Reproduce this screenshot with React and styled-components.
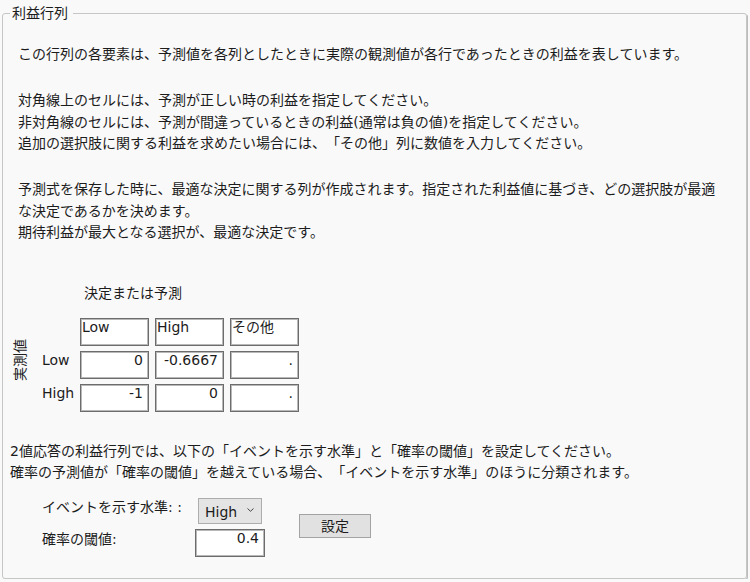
import * as React from 'react';
import styled, { createGlobalStyle } from 'styled-components';

const GlobalStyle = createGlobalStyle`
  html, body {
    margin: 0;
    padding: 0;
    background: #f9f9f9;
  }

  body {
    font-family: "DejaVu Sans", "Noto Sans CJK JP", sans-serif;
    font-size: 14px;
    color: #1c1c1c;
    text-spacing-trim: space-all;
  }
`;

const GroupBox = styled.fieldset`
  box-sizing: border-box;
  height: 576px;
  margin: 3px 3px 0 2px;
  padding: 0 7px;
  border: 1px solid #c6c6c6;
  border-radius: 3px;
  box-shadow: 1px 1px 0 #bcbcbc;
  min-inline-size: 0;
`;

const Legend = styled.legend`
  padding: 0 5px 0 2px;
  line-height: 20px;
`;

const Intro = styled.div`
  margin: 21px 0 0 8px;

  p {
    margin: 0 0 24.5px;
    line-height: 21.5px;
  }

  p:last-child {
    margin-bottom: 0;
  }
`;

const Matrix = styled.div`
  margin-top: 39px;
`;

const MatrixTitle = styled.div`
  padding-left: 74px;
  line-height: 21.5px;
  margin-bottom: 14px;
`;

const MatrixGrid = styled.div`
  display: grid;
  grid-template-columns: 20px 38px repeat(3, 69px);
  grid-template-rows: repeat(3, 28px);
  column-gap: 6px;
  row-gap: 5px;
`;

const SideLabel = styled.div`
  grid-column: 1;
  grid-row: 1 / 4;
  align-self: center;
  justify-self: center;
  writing-mode: vertical-rl;
  text-orientation: sideways;
  transform: rotate(180deg);
  margin-bottom: 10px;
  line-height: 15px;
`;

const RowLabel = styled.div`
  grid-column: 2;
  padding: 1px 0 0 6px;
  line-height: 16px;
`;

const Field = styled.div`
  box-sizing: border-box;
  width: ${p => p.$w || 69}px;
  height: ${p => p.$h || 28}px;
  padding: ${p => (p.$align === 'right' ? '0 5px 0 0' : '0 0 0 1px')};
  text-align: ${p => p.$align || 'left'};
  line-height: 16px;
  background: #fff;
  border: 1px solid #6c6c6c;
  box-shadow: inset 0 0 0 1px #b8b8b8;
  white-space: nowrap;
`;

const Prompt = styled.div`
  margin-top: 28.5px;
  line-height: 21px;
`;

const Controls = styled.div`
  display: grid;
  grid-template-columns: 153px 70px auto;
  grid-template-rows: 26px 28px;
  row-gap: 5px;
  margin: 15.5px 0 0 32px;
`;

const ControlLabel = styled.div`
  grid-column: 1;
  align-self: start;
  line-height: 18px;
  padding-top: ${p => p.$top || 0}px;
`;

const Dropdown = styled.div`
  grid-column: 2;
  grid-row: 1;
  justify-self: center;
  box-sizing: border-box;
  width: 64px;
  height: 26px;
  display: flex;
  align-items: center;
  justify-content: space-between;
  padding: 2px 7px 0 6px;
  background: #e4e4e4;
  border: 1px solid #adadad;

  svg {
    margin-bottom: 4px;
  }
`;

const SetButton = styled.button`
  grid-column: 3;
  grid-row: 1 / 3;
  align-self: center;
  box-sizing: border-box;
  width: 72px;
  height: 24px;
  margin: 0 0 3px 34px;
  padding: 0;
  font: inherit;
  color: inherit;
  line-height: 20px;
  background: #e1e1e1;
  border: 1px solid #a3a3a3;
`;

const cols = ['Low', 'High', 'その他'];
const rows = [
  { label: 'Low', values: ['0', '-0.6667', '.'] },
  { label: 'High', values: ['-1', '0', '.'] }
];

export default function App() {
  return (
    <>
      <GlobalStyle />
      <GroupBox>
        <Legend>利益行列</Legend>
        <Intro>
          <p>この行列の各要素は、予測値を各列としたときに実際の観測値が各行であったときの利益を表しています。</p>
          <p>
            対角線上のセルには、予測が正しい時の利益を指定してください。
            <br />
            非対角線のセルには、予測が間違っているときの利益(通常は負の値)を指定してください。
            <br />
            追加の選択肢に関する利益を求めたい場合には、「その他」列に数値を入力してください。
          </p>
          <p>
            予測式を保存した時に、最適な決定に関する列が作成されます。指定された利益値に基づき、どの選択肢が最適
            <br />
            な決定であるかを決めます。
            <br />
            期待利益が最大となる選択が、最適な決定です。
          </p>
        </Intro>

        <Matrix>
          <MatrixTitle>決定または予測</MatrixTitle>
          <MatrixGrid>
            <SideLabel>実測値</SideLabel>
            <RowLabel />
            {cols.map(c => (
              <Field key={c}>{c}</Field>
            ))}
            {rows.map(r => (
              <React.Fragment key={r.label}>
                <RowLabel>{r.label}</RowLabel>
                {r.values.map((v, i) => (
                  <Field key={i} $align="right">
                    {v}
                  </Field>
                ))}
              </React.Fragment>
            ))}
          </MatrixGrid>
        </Matrix>

        <Prompt>
          2値応答の利益行列では、以下の「イベントを示す水準」と「確率の閾値」を設定してください。
          <br />
          確率の予測値が「確率の閾値」を越えている場合、「イベントを示す水準」のほうに分類されます。
        </Prompt>

        <Controls>
          <ControlLabel>イベントを示す水準: :</ControlLabel>
          <Dropdown>
            <span>High</span>
            <svg width="7" height="4" viewBox="0 0 7 4">
              <path d="M0.5 0.5 L3.5 3.3 L6.5 0.5" fill="none" stroke="#444" strokeWidth="1" />
            </svg>
          </Dropdown>
          <ControlLabel $top={1}>確率の閾値:</ControlLabel>
          <Field $w={70} $h={28} $align="right" style={{ gridColumn: 2, gridRow: 2 }}>
            0.4
          </Field>
          <SetButton type="button">設定</SetButton>
        </Controls>
      </GroupBox>
    </>
  );
}
